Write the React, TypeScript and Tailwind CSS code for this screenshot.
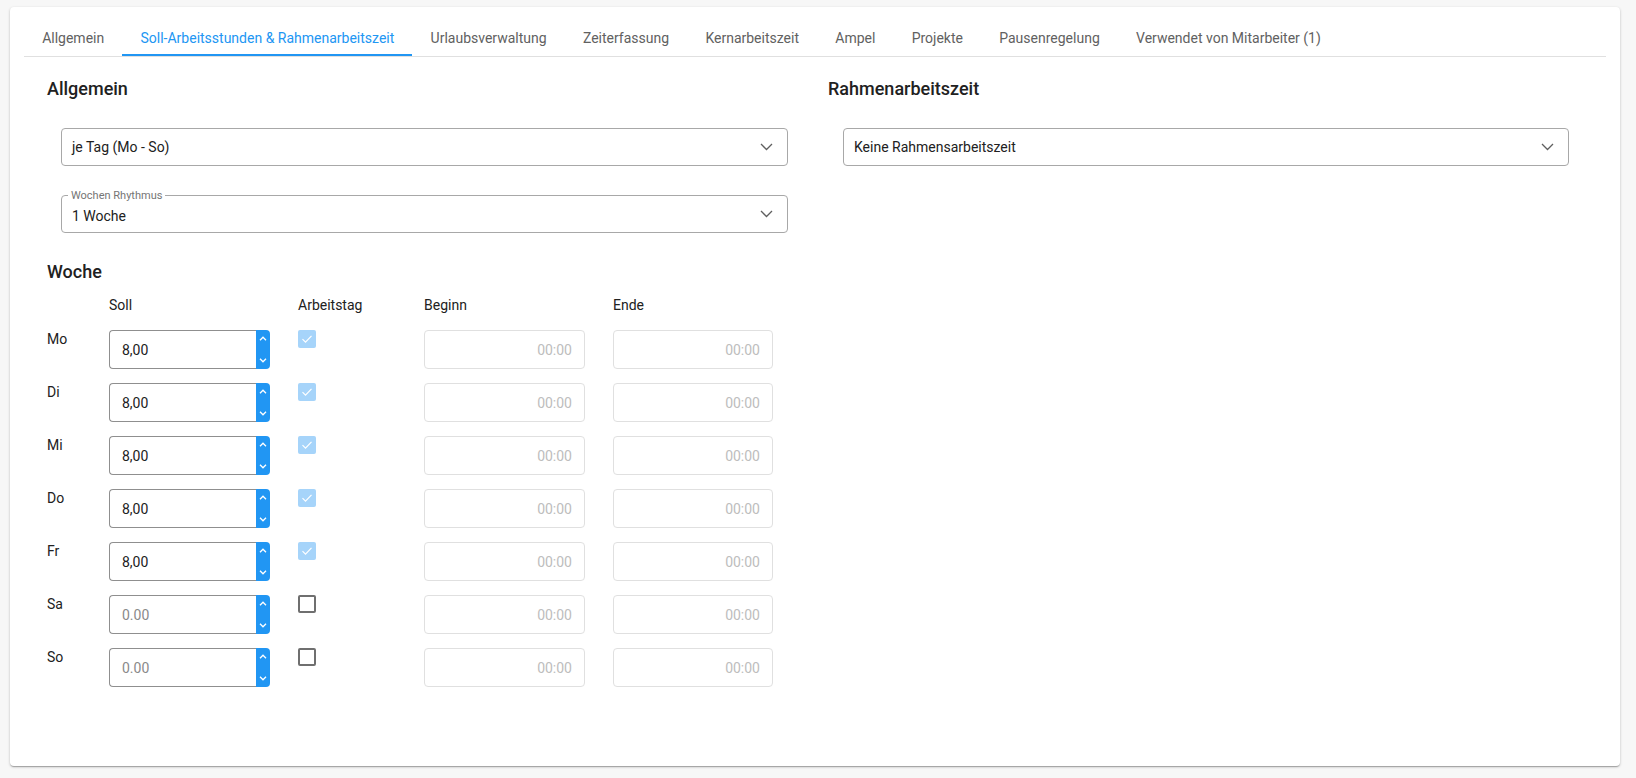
import React from "react";

const tabs = [
  "Allgemein",
  "Soll-Arbeitsstunden & Rahmenarbeitszeit",
  "Urlaubsverwaltung",
  "Zeiterfassung",
  "Kernarbeitszeit",
  "Ampel",
  "Projekte",
  "Pausenregelung",
  "Verwendet von Mitarbeiter (1)",
];

const days = [
  { day: "Mo", soll: "8,00", work: true },
  { day: "Di", soll: "8,00", work: true },
  { day: "Mi", soll: "8,00", work: true },
  { day: "Do", soll: "8,00", work: true },
  { day: "Fr", soll: "8,00", work: true },
  { day: "Sa", soll: "", work: false },
  { day: "So", soll: "", work: false },
];

const Chevron = () => (
  <svg width="13" height="8" viewBox="0 0 13 8" fill="none">
    <path d="M1 1l5.5 5.5L12 1" stroke="#5f5f5f" strokeWidth="1.3" />
  </svg>
);

const SelectBox: React.FC<{ value: string; label?: string; className?: string }> = ({
  value,
  label,
  className,
}) => (
  <div
    className={
      "relative h-[38px] border border-[#a8a8a8] rounded-[4px] flex items-center justify-between pl-[10px] pr-[14px] " +
      (className ?? "")
    }
  >
    {label && (
      <span className="absolute -top-[7px] left-[6px] px-[3px] bg-white text-[11px] leading-[13px] text-[#757575]">
        {label}
      </span>
    )}
    <span className={"text-[14px] text-[#212121] " + (label ? "pt-[4px]" : "")}>{value}</span>
    <Chevron />
  </div>
);

const NumberInput: React.FC<{ value: string }> = ({ value }) => (
  <div className="flex h-[39px] w-[161px]">
    <div className="flex-1 flex items-center pl-[12px] pt-[2px] border border-r-0 border-[#8f8f8f] rounded-l-[4px] text-[14px]">
      {value ? (
        <span className="text-[#212121]">{value}</span>
      ) : (
        <span className="text-[#8a8a8a]">0.00</span>
      )}
    </div>
    <div className="w-[14px] bg-[#2196f3] rounded-r-[4px] flex flex-col items-center justify-between py-[6px]">
      <svg width="8" height="5" viewBox="0 0 8 5" fill="none">
        <path d="M1 4.2L4 1.2l3 3" stroke="white" strokeWidth="1.3" />
      </svg>
      <svg width="8" height="5" viewBox="0 0 8 5" fill="none">
        <path d="M1 0.8L4 3.8l3-3" stroke="white" strokeWidth="1.3" />
      </svg>
    </div>
  </div>
);

const Checkbox: React.FC<{ checked: boolean }> = ({ checked }) =>
  checked ? (
    <div className="w-[18px] h-[18px] rounded-[2px] bg-[#a6d4fa] flex items-center justify-center">
      <svg width="14" height="14" viewBox="0 0 14 14" fill="none">
        <path d="M2.5 7.2l3 3 6-6.4" stroke="white" strokeWidth="1.2" />
      </svg>
    </div>
  ) : (
    <div className="w-[18px] h-[18px] rounded-[2px] border-2 border-[#6f6f6f]" />
  );

const TimeInput = () => (
  <div className="h-[39px] border border-[#e0e0e0] rounded-[4px] flex items-center justify-end pr-[12px] pt-[2px] text-[14px] text-[#bdbdbd]">
    00:00
  </div>
);

export default function App() {
  return (
    <div
      className="min-h-screen bg-[#f7f7f7] pt-[7px] pl-[10px]"
      style={{ fontFamily: "Roboto, 'Liberation Sans', sans-serif" }}
    >
      <div className="w-[1610px] h-[759px] bg-white rounded-[4px] shadow-[0_1px_3px_rgba(0,0,0,0.2),0_1px_1px_rgba(0,0,0,0.14),0_2px_1px_-1px_rgba(0,0,0,0.12)] pt-[15px] px-[14px]">
        <div className="flex border-b border-[#e0e0e0]">
          {tabs.map((t, i) => (
            <div
              key={t}
              className={
                "relative px-[18.15px] pt-[6px] pb-[8px] text-[14px] leading-[20px] " +
                (i === 1 ? "text-[#2196f3]" : "text-[#616161]")
              }
            >
              {t}
              {i === 1 && <span className="absolute left-0 right-0 bottom-0 h-[2px] bg-[#2196f3]" />}
            </div>
          ))}
        </div>

        <div className="flex pl-[23px] pt-[20px]">
          <div className="w-[785px]">
            <h2 className="text-[18px] leading-[24px] font-medium text-[#212121]">Allgemein</h2>
            <SelectBox value="je Tag (Mo - So)" className="mt-[27px] ml-[14px] w-[727px]" />
            <SelectBox value="1 Woche" label="Wochen Rhythmus" className="mt-[29px] ml-[14px] w-[727px]" />

            <h2 className="mt-[27px] text-[18px] leading-[24px] font-medium text-[#212121]">Woche</h2>

            <div className="mt-[11px] flex text-[14px] leading-[20px] text-[#212121]">
              <div className="w-[62px]" />
              <div className="w-[161px]">Soll</div>
              <div className="ml-[28px] w-[126px]">Arbeitstag</div>
              <div className="w-[161px]">Beginn</div>
              <div className="ml-[28px] w-[160px]">Ende</div>
            </div>

            <div className="mt-[15px] flex flex-col gap-[14px]">
              {days.map((d) => (
                <div key={d.day} className="flex items-start">
                  <div className="w-[62px] text-[14px] leading-[18px] text-[#212121]">{d.day}</div>
                  <NumberInput value={d.soll} />
                  <div className="ml-[28px] w-[126px]">
                    <Checkbox checked={d.work} />
                  </div>
                  <div className="w-[161px]">
                    <TimeInput />
                  </div>
                  <div className="ml-[28px] w-[160px]">
                    <TimeInput />
                  </div>
                </div>
              ))}
            </div>
          </div>

          <div className="w-[782px]">
            <h2 className="text-[18px] leading-[24px] font-medium text-[#212121]">Rahmenarbeitszeit</h2>
            <SelectBox value="Keine Rahmensarbeitszeit" className="mt-[27px] ml-[15px] w-[726px]" />
          </div>
        </div>
      </div>
    </div>
  );
}
